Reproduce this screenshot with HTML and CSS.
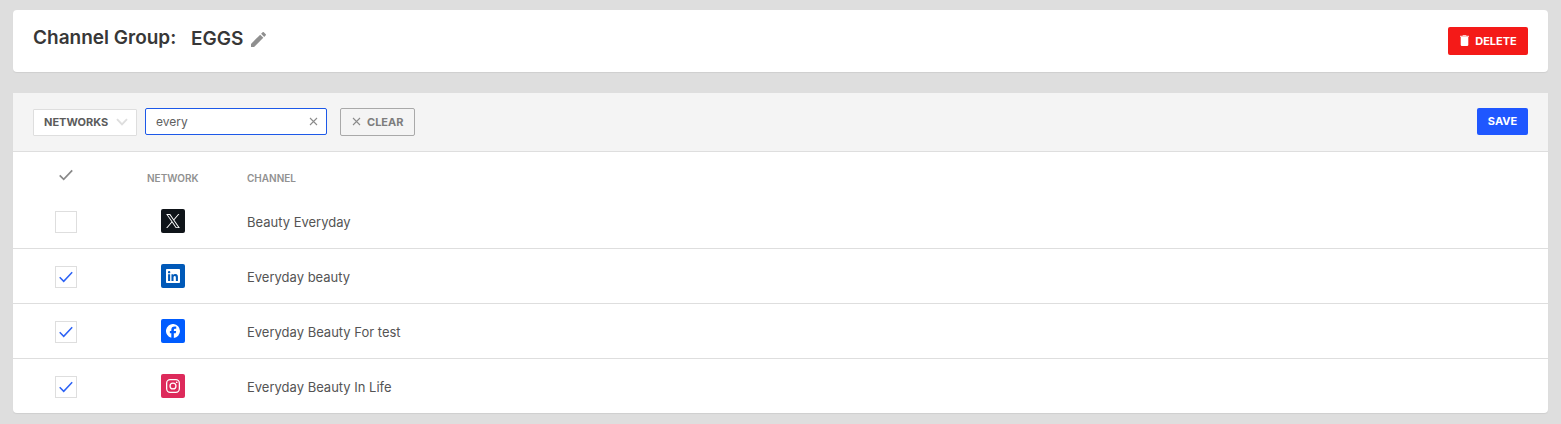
FILE: index.html
```html
<!DOCTYPE html>
<html lang="en">
<head>
<meta charset="utf-8">
<title>Channel Group</title>
<link rel="stylesheet" href="styles.css">
</head>
<body>
<header class="group-card">
  <h1 class="group-label">Channel Group:</h1>
  <span class="group-name">EGGS</span>
  <svg class="icon-edit" viewBox="3 3 18 18"><path d="M3 17.25V21h3.75L17.8 9.94l-3.75-3.75L3 17.25z"/><path class="eraser" d="M20.7 7.04a1 1 0 0 0 0-1.41l-2.34-2.34a1 1 0 0 0-1.41 0l-1.83 1.83 3.75 3.75 1.83-1.83z"/></svg>
  <button class="btn btn-delete"><svg class="icon-trash" viewBox="0 0 9 11"><path class="lid" d="M0 .8h2.4L3 0h3l.6.8H9V2H0z"/><path d="M.7 2h7.600v7.800A1.200 1.200 0 0 1 7.100 11H1.900A1.200 1.200 0 0 1 .7 9.800z"/></svg><span>DELETE</span></button>
</header>
<main class="panel">
  <div class="toolbar">
    <button class="select"><span>NETWORKS</span><svg class="icon-chevron" viewBox="0 0 12 8"><path d="M1 1.200l5 5.200 5-5.200"/></svg></button>
    <div class="search"><input class="search-input" type="text" value="every"><svg class="icon-x" viewBox="0 0 9 9"><path d="M1 1l7 7M8 1l-7 7"/></svg></div>
    <button class="btn-clear"><svg class="icon-x" viewBox="0 0 9 9"><path d="M1 1l7 7M8 1l-7 7"/></svg><span>CLEAR</span></button>
    <button class="btn btn-save">SAVE</button>
  </div>
  <div class="table-head">
    <svg class="check check-all" viewBox="0 0 14 12"><path d="M.7 6.300l4 4L13.200 1.300"/></svg>
    <span class="head-network">NETWORK</span>
    <span class="head-channel">CHANNEL</span>
  </div>
  <div class="row">
    <span class="box"></span>
    <span class="network x"><svg viewBox="0 0 24 24"><path d="M14.234 10.162 22.977 0h-2.072l-7.591 8.824L7.251 0H.258l9.168 13.343L.258 24H2.330l8.016-9.318L16.749 24h6.993zm-2.837 3.299-.929-1.329L3.076 1.560h3.182l5.965 8.532.929 1.329 7.754 11.090h-3.182z"/></svg></span>
    <span class="channel">Beauty Everyday</span>
  </div>
  <div class="row">
    <span class="box"><svg class="check" viewBox="0 0 14 12"><path d="M.7 6.300l4 4L13.200 1.300"/></svg></span>
    <span class="network linkedin"><svg viewBox="0 0 24 24"><path d="M20.447 20.452h-3.554v-5.569c0-1.328-.027-3.037-1.852-3.037-1.853 0-2.136 1.445-2.136 2.939v5.667H9.351V9h3.414v1.561h.046c.477-.9 1.637-1.850 3.370-1.850 3.601 0 4.267 2.370 4.267 5.455v6.286zM5.337 7.433a2.062 2.062 0 0 1-2.063-2.065 2.064 2.064 0 1 1 2.063 2.065zm1.782 13.019H3.555V9h3.564v11.452zM22.225 0H1.771C.792 0 0 .774 0 1.729v20.542C0 23.227.792 24 1.771 24h20.451C23.200 24 24 23.227 24 22.271V1.729C24 .774 23.200 0 22.222 0h.003z"/></svg></span>
    <span class="channel">Everyday beauty</span>
  </div>
  <div class="row">
    <span class="box"><svg class="check" viewBox="0 0 14 12"><path d="M.7 6.300l4 4L13.200 1.300"/></svg></span>
    <span class="network facebook"><svg viewBox="0 0 24 24"><path d="M24 12a12 12 0 1 0-14.900 11.640v-7.980H6.630V12H9.100v-1.580c0-4.080 1.850-5.970 5.850-5.970.76 0 2.070.15 2.610.3v3.310c-.28-.03-.78-.04-1.390-.04-1.970 0-2.730.75-2.730 2.680V12h3.920l-.67 3.660h-3.240v8.250A12 12 0 0 0 24 12z"/></svg></span>
    <span class="channel">Everyday Beauty For test</span>
  </div>
  <div class="row">
    <span class="box"><svg class="check" viewBox="0 0 14 12"><path d="M.7 6.300l4 4L13.200 1.300"/></svg></span>
    <span class="network instagram"><svg viewBox="0 0 24 24"><rect class="outline" x="1.100" y="1.100" width="21.800" height="21.800" rx="6"/><circle class="outline" cx="12" cy="12" r="5.100"/><circle cx="18.400" cy="5.600" r="1.450"/></svg></span>
    <span class="channel">Everyday Beauty In Life</span>
  </div>
</main>
</body>
</html>
```
FILE: styles.css
```css
* { box-sizing: border-box; }
body {
  margin: 0;
  padding: 10px 13px;
  background: #dedede;
  font-family: Inter, "Liberation Sans", sans-serif;
  color: #545454;
}
svg { display: block; flex: none; }
button { font-family: inherit; margin: 0; border: 0; }
.group-card {
  display: flex;
  height: 62px;
  padding: 0 20px;
  background: #fff;
  border-radius: 4px;
  box-shadow: 0 1px 1px #cfcfcf;
}
.group-label, .group-name {
  margin: 16px 0 0;
  font-size: 19px;
  line-height: 24px;
  font-weight: 600;
  color: #373737;
  white-space: nowrap;
}
.group-label { width: 158px; }
.group-name { margin-top: 17px; width: 60px; }
.icon-edit { width: 15px; height: 15px; margin-top: 22px; fill: #8f8f8f; }
.eraser { fill: #8f8f8f; }
.btn {
  display: flex;
  align-items: center;
  justify-content: center;
  border-radius: 2px;
  color: #fff;
  font-size: 11px;
  font-weight: 700;
  line-height: 14px;
  padding: 0;
}
.btn-delete { width: 80px; height: 28px; margin: 17px 0 0 auto; padding-left: 1px; gap: 6px; background: #f41a18; }
.icon-trash { width: 9px; height: 11px; margin-bottom: 1px; fill: #fff; }
.lid { opacity: .75; }
.panel {
  margin-top: 21px;
  height: 320px;
  background: #fff;
  border-radius: 0 0 4px 4px;
  box-shadow: 0 1px 1px #cfcfcf;
}
.toolbar {
  display: flex;
  height: 59px;
  padding: 15px 20px 0;
  background: #f4f4f4;
  border-bottom: 1px solid #dedede;
}
.select {
  display: flex;
  align-items: center;
  justify-content: space-between;
  width: 104px;
  height: 27px;
  margin-top: 1px;
  padding: 0 8px 1px 10px;
  background: #fff;
  border: 1px solid #dedede;
  border-radius: 1px;
  color: #5b5b5b;
  font-size: 11px;
  line-height: 14px;
  font-weight: 700;
}
.icon-chevron { width: 12px; height: 8px; fill: none; stroke: #dedede; stroke-width: 1.9; }
.search {
  display: flex;
  align-items: center;
  width: 182px;
  height: 27px;
  margin-left: 8px;
  padding: 0 8px 0 10px;
  background: #fff;
  border: 1px solid #1d59e8;
  border-radius: 2px;
}
.search-input {
  flex: 1;
  min-width: 0;
  padding: 0;
  border: 0;
  outline: 0;
  background: none;
  font: 12px/16px Inter, "Liberation Sans", sans-serif;
  color: #606060;
}
.icon-x { width: 9px; height: 9px; fill: none; stroke: #8b8b8b; stroke-width: 1.1; }
.btn-clear {
  display: flex;
  align-items: center;
  gap: 6px;
  width: 75px;
  height: 28px;
  margin-left: 13px;
  padding: 0 0 0 11px;
  background: #f4f4f4;
  border: 1px solid #a9a9a9;
  border-radius: 2px;
  color: #7d7d7d;
  font-size: 11px;
  font-weight: 700;
}
.btn-clear .icon-x { margin-bottom: 1px; }
.btn-save { width: 51px; height: 27px; margin-left: auto; padding-bottom: 1px; background: #1f57ff; }
.table-head, .row {
  display: grid;
  grid-template-columns: 92px 87px 1fr;
  padding-left: 42px;
}
.table-head { height: 42px; font-size: 10px; line-height: 12px; font-weight: 600; color: #919191; }
.check { width: 14px; height: 12px; fill: none; stroke: #2c62f5; stroke-width: 1.500; }
.check-all { margin: 17px 0 0 4px; stroke: #898989; stroke-width: 1.700; }
.head-network { margin-top: 20px; }
.head-channel { margin: 20px 0 0 13px; }
.row { height: 55px; border-bottom: 1px solid #dedede; }
.row:last-child { border-bottom: 0; }
.box {
  display: flex;
  align-items: center;
  justify-content: center;
  width: 22px;
  height: 22px;
  margin-top: 17px;
  border: 1px solid #dedede;
}
.network {
  display: flex;
  align-items: center;
  justify-content: center;
  width: 24px;
  height: 24px;
  margin: 15px 0 0 14px;
  border-radius: 2px;
}
.network svg { width: 14px; height: 14px; fill: #fff; }
.x { background: #0f1419; }
.linkedin { background: #0059b8; }
.facebook { background: #005cff; }
.instagram { background: #dd2a5b; }
.outline { fill: none; stroke: #fff; stroke-width: 2.200; }
.channel { margin: 19px 0 0 13px; font-size: 13px; line-height: 18px; white-space: nowrap; }
```
